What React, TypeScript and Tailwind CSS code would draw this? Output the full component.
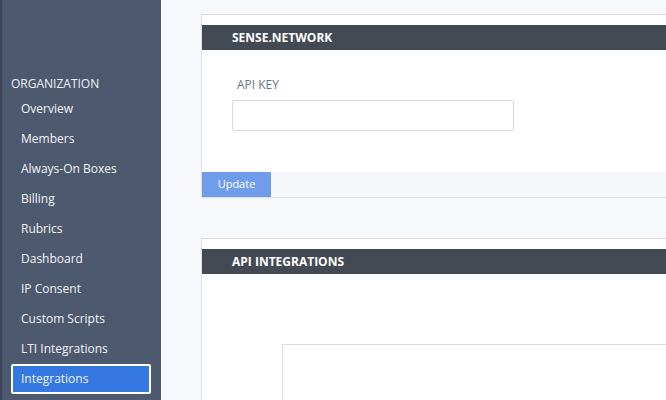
import React from "react";

const NAV_ITEMS = [
  "Overview",
  "Members",
  "Always-On Boxes",
  "Billing",
  "Rubrics",
  "Dashboard",
  "IP Consent",
  "Custom Scripts",
  "LTI Integrations",
  "Integrations",
];

const Sidebar: React.FC = () => (
  <aside className="flex h-[400px] w-[161px] shrink-0 flex-col border-l-2 border-[#3a4457] bg-[#4d596f] pt-[74px]">
    <div className="pl-[9px] text-[12px] leading-5 font-medium text-[#eef1f7]">ORGANIZATION</div>
    <nav className="flex flex-col">
      {NAV_ITEMS.map((item) => {
        const active = item === "Integrations";
        return (
          <div
            key={item}
            className={
              active
                ? "ml-[9px] flex h-[30px] w-[140px] items-center rounded-[2px] border-2 border-white bg-[#3578e2] pl-[8px] text-[12px] font-medium text-[#eef2fb]"
                : "ml-[9px] flex h-[30px] w-[140px] items-center border-2 border-transparent pl-[8px] text-[12px] font-medium text-[#f2f4f8]"
            }
          >
            {item}
          </div>
        );
      })}
    </nav>
  </aside>
);

const CardHeader: React.FC<{ title: string }> = ({ title }) => (
  <div className="flex h-[25px] items-center bg-[#434a54] pl-[30px] text-[12px] font-bold text-white">
    {title}
  </div>
);

const App: React.FC = () => (
  <div
    className="flex h-[400px] w-[666px] overflow-hidden bg-[#f7f8fc]"
    style={{ fontFamily: '"Open Sans", "Noto Sans", sans-serif' }}
  >
    <Sidebar />
    <main className="flex min-w-0 flex-1 flex-col pl-[40px] pt-[14px]">
      {/* Sense.network card */}
      <section className="w-[600px] shrink-0 border border-[#dcdee8] bg-white pt-[10px]">
        <CardHeader title="SENSE.NETWORK" />
        <div className="h-[122px] pl-[30px] pt-[27px]">
          <label className="block pl-[5px] text-[12px] leading-4 text-[#6b7385]">API KEY</label>
          <input
            type="text"
            className="mt-[7px] block h-[31px] w-[282px] rounded-[2px] border border-[#d5d8e3] bg-white outline-none"
          />
        </div>
        <div className="flex h-[25px] bg-[#f5f7fb]">
          <button className="h-[25px] w-[69px] bg-[#6f9ceb] text-[11px] text-white">Update</button>
        </div>
      </section>

      {/* API integrations card */}
      <section className="mt-[40px] w-[600px] shrink-0 flex-1 border border-[#dcdee8] bg-white pt-[10px]">
        <CardHeader title="API INTEGRATIONS" />
        <div className="pl-[80px] pt-[70px]">
          <div className="h-[80px] w-[500px] border border-[#dcdcde] bg-white" />
        </div>
      </section>
    </main>
  </div>
);

export default App;
